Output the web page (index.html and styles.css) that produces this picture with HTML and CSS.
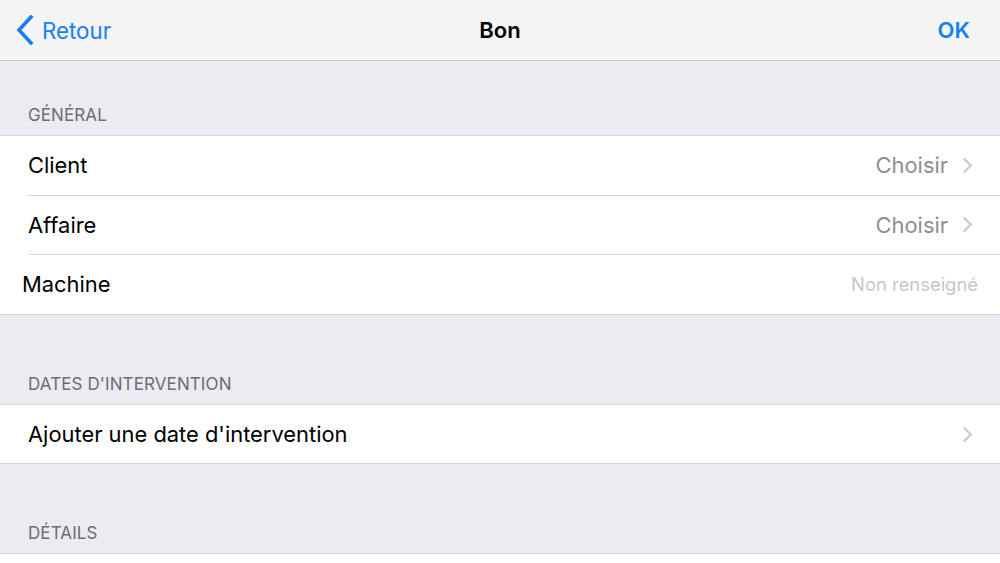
FILE: index.html
```html
<!DOCTYPE html>
<html lang="fr">
<head>
<meta charset="utf-8">
<link rel="stylesheet" href="styles.css">
</head>
<body>
<header class="nav">
  <a class="back">
    <svg class="back-icon" width="20" height="30" viewBox="0 0 20 30"><path d="M16 2 L4 15 L16 28" fill="none" stroke="#157efb" stroke-width="3.6" stroke-linecap="square" stroke-linejoin="miter"/></svg>
    <span>Retour</span>
  </a>
  <h1 class="title">Bon</h1>
  <a class="done">OK</a>
</header>
<main class="content">
  <section class="section first">
    <div class="section-header">GÉNÉRAL</div>
    <div class="group">
      <div class="row"><span class="label">Client</span><span class="value">Choisir</span><span class="chev"></span></div>
      <div class="row"><span class="label">Affaire</span><span class="value">Choisir</span><span class="chev"></span></div>
      <div class="row machine"><span class="label">Machine</span><span class="placeholder">Non renseigné</span></div>
    </div>
  </section>
  <section class="section">
    <div class="section-header">DATES D'INTERVENTION</div>
    <div class="group">
      <div class="row"><span class="label">Ajouter une date d'intervention</span><span class="chev"></span></div>
    </div>
  </section>
  <section class="section">
    <div class="section-header">DÉTAILS</div>
    <div class="group">
      <div class="row"><span class="label">&nbsp;</span></div>
    </div>
  </section>
</main>
</body>
</html>
```
FILE: styles.css
```css
html, body {
  margin: 0;
  padding: 0;
  background: #ebebf1;
  font-family: "Inter", "Liberation Sans", sans-serif;
  overflow: hidden;
  height: 563px;
}
.nav {
  height: 60px;
  background: #f5f5f5;
  border-bottom: 1px solid #c4c4c8;
  display: flex;
  align-items: center;
  justify-content: space-between;
  position: relative;
  padding: 0 30px 0 15px;
}
.back {
  display: flex;
  align-items: center;
  gap: 7px;
  color: #157efb;
  font-size: 22.3px;
}
.back-icon { display: block; }
.title {
  position: absolute;
  left: 0;
  right: 0;
  text-align: center;
  margin: 0;
  font-size: 22px;
  font-weight: 600;
  color: #000;
  pointer-events: none;
}
.done {
  color: #157efb;
  font-size: 22px;
  font-weight: 600;
}
.section-header {
  height: 89px;
  box-sizing: border-box;
  display: flex;
  align-items: flex-end;
  padding: 0 0 10px 28px;
  font-size: 17px;
  color: #6d6d72;
  letter-spacing: 0.1px;
}
.first .section-header { height: 74px; }
.group {
  background: #fff;
  border-top: 1px solid #d8d8dc;
  border-bottom: 1px solid #d8d8dc;
}
.row {
  height: 58.6px;
  display: flex;
  align-items: center;
  padding: 0 28px 0 28px;
  position: relative;
  font-size: 21.9px;
  color: #000;
}
.row + .row { border-top: 1px solid transparent; }
.row + .row::before {
  content: "";
  position: absolute;
  top: -1px;
  left: 28px;
  right: 0;
  height: 1px;
  background: #d8d8dc;
}
.label { flex: 1; }
.machine { padding-left: 22px; padding-right: 22px; }
.value { color: #8e8e93; }
.chev {
  width: 9px;
  height: 9px;
  border-right: 2px solid #c7c7cc;
  border-top: 2px solid #c7c7cc;
  transform: rotate(45deg);
  margin-left: 11px;
  margin-right: 2px;
}
.placeholder {
  color: #c7c7cc;
  font-size: 18.4px;
}
```
